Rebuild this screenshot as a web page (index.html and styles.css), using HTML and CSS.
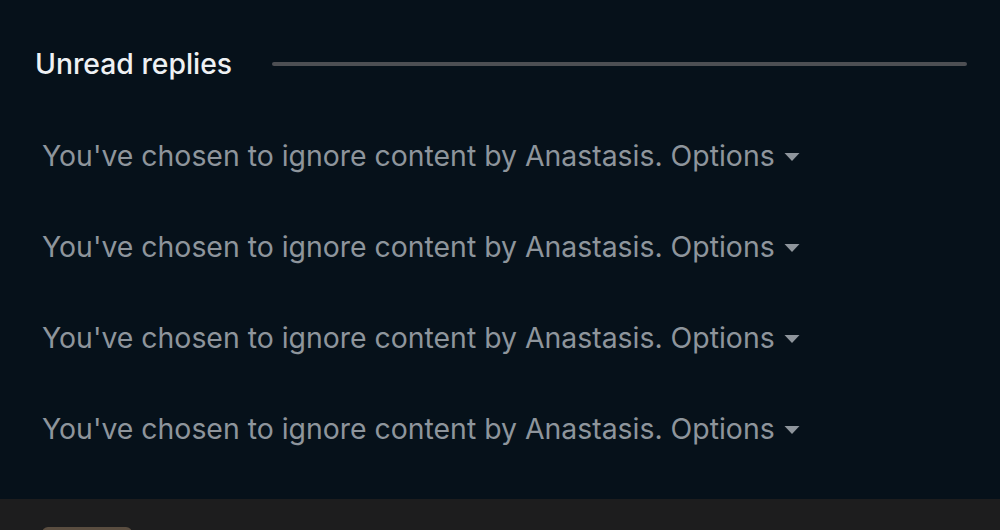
FILE: index.html
```html
<!DOCTYPE html>
<html>
<head>
<meta charset="utf-8">
<link rel="stylesheet" href="styles.css">
</head>
<body>
<div class="page">
  <section class="block">
    <div class="block-header">
      <h2 class="block-title">Unread replies</h2>
      <span class="block-rule"></span>
    </div>
    <ul class="ignored-list">
      <li class="ignored">You've chosen to ignore content by Anastasis. <span class="options">Options<svg class="caret" width="16" height="10" viewBox="0 0 16 10"><path d="M0.5 1h15l-7.5 8z" fill="currentColor"/></svg></span></li>
      <li class="ignored">You've chosen to ignore content by Anastasis. <span class="options">Options<svg class="caret" width="16" height="10" viewBox="0 0 16 10"><path d="M0.5 1h15l-7.5 8z" fill="currentColor"/></svg></span></li>
      <li class="ignored">You've chosen to ignore content by Anastasis. <span class="options">Options<svg class="caret" width="16" height="10" viewBox="0 0 16 10"><path d="M0.5 1h15l-7.5 8z" fill="currentColor"/></svg></span></li>
      <li class="ignored">You've chosen to ignore content by Anastasis. <span class="options">Options<svg class="caret" width="16" height="10" viewBox="0 0 16 10"><path d="M0.5 1h15l-7.5 8z" fill="currentColor"/></svg></span></li>
    </ul>
  </section>
  <section class="next-block">
    <div class="thumb"></div>
  </section>
</div>
</body>
</html>
```
FILE: styles.css
```css
* { box-sizing: border-box; }
html, body { margin: 0; padding: 0; }
body {
  background: #06111a;
  font-family: Inter, "Noto Sans", sans-serif;
  width: 1000px;
  height: 530px;
  overflow: hidden;
}
.page { display: flex; flex-direction: column; }
.block {
  padding: 44px 33px 0 35px;
  height: 499px;
}
.block-header {
  display: flex;
  align-items: center;
  gap: 40px;
}
.block-title {
  margin: 0;
  font-size: 28.3px;
  font-weight: 500;
  color: #eef1f4;
  line-height: 40px;
  white-space: nowrap;
}
.block-rule {
  flex: 1;
  height: 4px;
  border-radius: 2px;
  background: #4d4f53;
}
.ignored-list {
  list-style: none;
  margin: 52px 0 0;
  padding: 0 0 0 7px;
}
.ignored {
  font-size: 28.4px;
  color: #8e959c;
  line-height: 40px;
  margin-bottom: 51px;
  white-space: nowrap;
}
.options { display: inline-flex; align-items: center; gap: 9px; }
.caret { display: block; margin-top: 2px; }
.next-block {
  background: #1d1d1e;
  height: 31px;
  padding: 28px 0 0 42px;
}
.thumb {
  width: 90px;
  height: 10px;
  border-radius: 6px 6px 0 0;
  background: #5a4d40;
}
```
